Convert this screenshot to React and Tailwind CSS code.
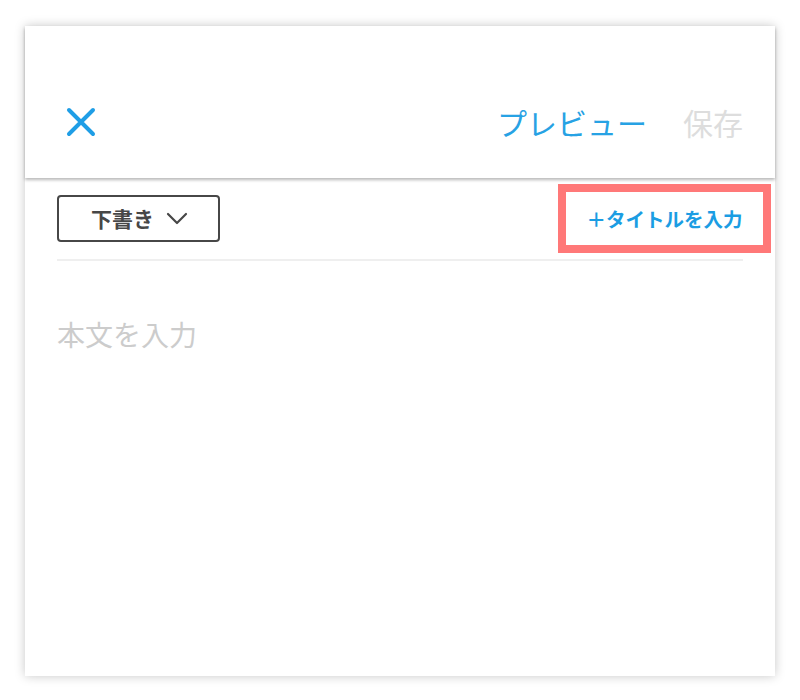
import React from "react";

export default function App() {
  const jp = { fontFamily: '"Noto Sans CJK JP", "Noto Sans", sans-serif' };
  return (
    <div className="w-[800px] h-[700px] bg-white pt-[26px] pl-[25px]" style={jp}>
      <div className="w-[750px] h-[650px] bg-white shadow-[0_0_10px_rgba(0,0,0,0.22)] flex flex-col">
        <div className="relative z-10 bg-white pt-[68px] pb-[28px] pl-[38px] pr-[32px] shadow-[0_2px_3px_rgba(0,0,0,0.28)]">
          <div className="h-[56px] flex items-center justify-between">
            <svg width="36" height="36" viewBox="0 0 36 36" className="mt-[-1px]">
              <path d="M6 6 L30 30 M30 6 L6 30" stroke="#1f9ee6" strokeWidth="4" strokeLinecap="round" fill="none" />
            </svg>
            <div className="flex items-center gap-[36px] text-[30px] leading-none">
              <span className="text-[#27a2e4]">プレビュー</span>
              <span className="text-[#dddddd]">保存</span>
            </div>
          </div>
        </div>
        <div className="px-[32px] pt-[6px]">
          <div className="flex items-center justify-between h-[69px]">
            <button className="w-[163px] h-[47px] border-2 border-[#474747] rounded-[4px] flex items-center justify-center gap-[12px] text-[#474747] text-[21px] font-bold leading-none">
              <span className="ml-[2px]">下書き</span>
              <svg width="22" height="14" viewBox="0 0 22 14">
                <path d="M2 2 L11 11 L20 2" stroke="#474747" strokeWidth="2.2" fill="none" strokeLinecap="round" strokeLinejoin="round" />
              </svg>
            </button>
            <button className="mr-[-28px] w-[213px] h-[69px] border-[8px] border-[#ff7878] flex items-center justify-center text-[#1b9de3] text-[19.5px] font-bold leading-none">
              ＋タイトルを入力
            </button>
          </div>
          <div className="mt-[6px] h-[2px] bg-[#efefef]"></div>
          <div className="mt-[59px] text-[28px] leading-none text-[#cccccc]">本文を入力</div>
        </div>
      </div>
    </div>
  );
}
